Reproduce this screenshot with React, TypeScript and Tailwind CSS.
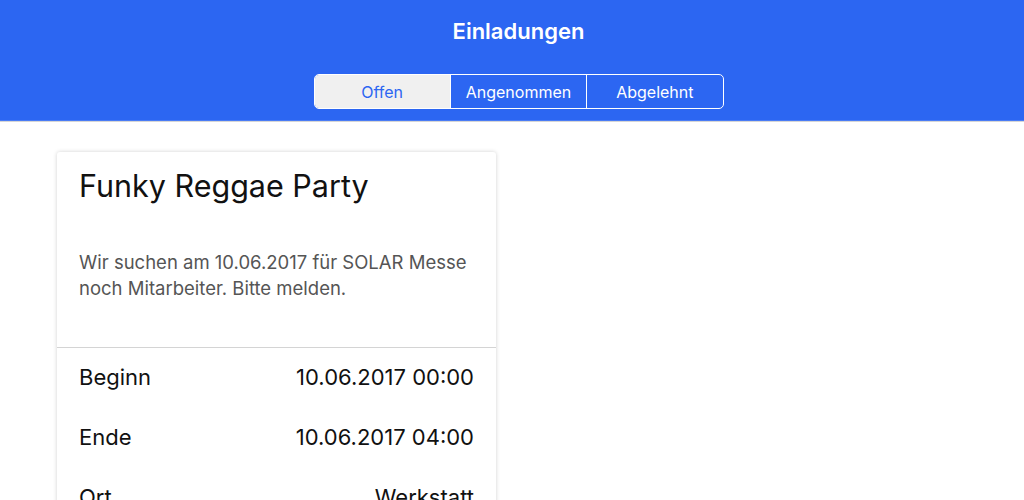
import React from 'react';

const tabs = ['Offen', 'Angenommen', 'Abgelehnt'];

const rows = [
  { label: 'Beginn', value: '10.06.2017 00:00' },
  { label: 'Ende', value: '10.06.2017 04:00' },
  { label: 'Ort', value: 'Werkstatt' },
];

const App: React.FC = () => {
  const active = 'Offen';

  return (
    <div className="w-[1024px] h-[500px] overflow-hidden bg-white font-['Inter','Liberation_Sans',sans-serif]">
      {/* header */}
      <div className="h-[121px] bg-[#2c66f2] border-b border-[#4a7cf5] shadow-[0_1px_0_#d6d6d6] flex flex-col items-center pl-[13px]">
        <h1 className="mt-[17px] h-[28px] text-[22px] leading-[28px] font-semibold text-white">Einladungen</h1>
        <div className="mt-[29px] flex h-[35px] w-[410px] rounded-[5px] border border-white overflow-hidden">
          {tabs.map((t, i) => (
            <div
              key={t}
              className={
                'flex-1 flex items-center justify-center text-[16px] ' +
                (i > 0 ? 'border-l border-white ' : '') +
                (t === active ? 'bg-[#f0f0f0] text-[#2c66f2]' : 'text-white')
              }
            >
              {t}
            </div>
          ))}
        </div>
      </div>

      {/* card */}
      <div className="pt-[31px] pl-[57px]">
        <div className="w-[439px] bg-white rounded-[3px] shadow-[0_0_4px_rgba(0,0,0,0.18)]">
          <div className="pl-[22px] pr-[12px] pt-[16px] pb-[46px]">
            <h2 className="text-[30.5px] leading-[36px] text-[#111]">Funky Reggae Party</h2>
            <p className="mt-[45px] text-[18.5px] leading-[26px] text-[#555]">
              Wir suchen am 10.06.2017 für SOLAR Messe noch Mitarbeiter. Bitte melden.
            </p>
          </div>
          <div className="border-t border-[#d4d4d4]">
            {rows.map(r => (
              <div key={r.label} className="h-[60px] pb-[1px] px-[22px] flex items-center justify-between text-[22px] text-[#111]">
                <span>{r.label}</span>
                <span>{r.value}</span>
              </div>
            ))}
          </div>
        </div>
      </div>
    </div>
  );
};

export default App;
